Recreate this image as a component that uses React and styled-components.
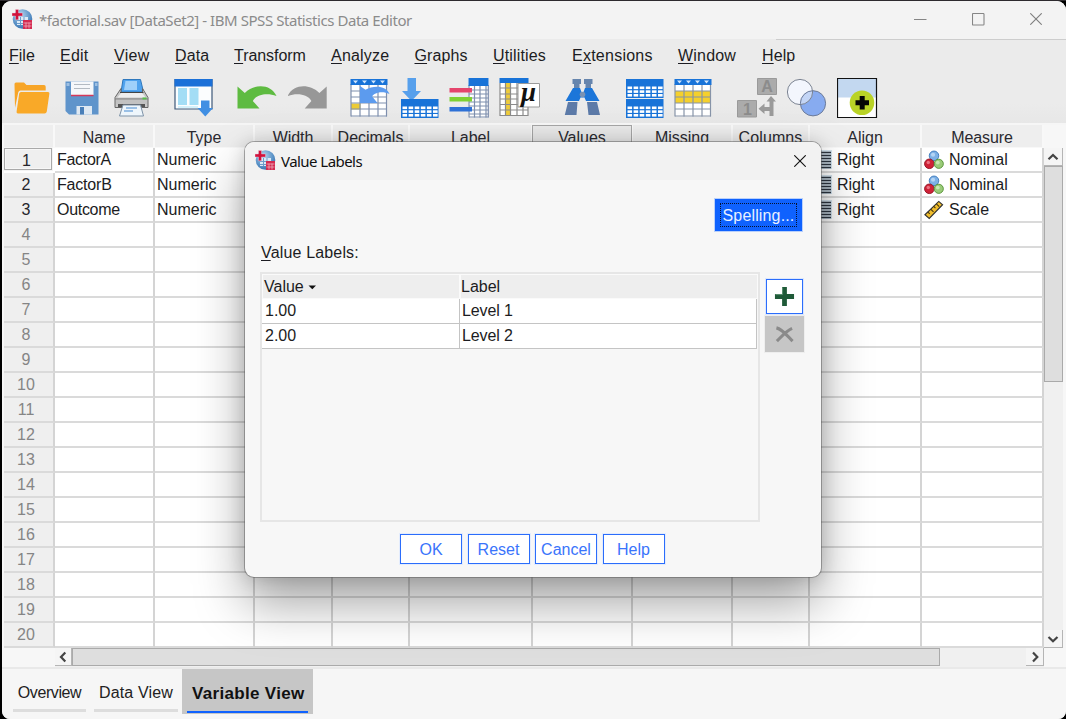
import React from 'react';
import styled, { createGlobalStyle, css } from 'styled-components';

const Global = createGlobalStyle`
  * { box-sizing: border-box; }
  html, body { margin: 0; background: #000; overflow: hidden; }
  body { font-family: "Liberation Sans", Arial, sans-serif; font-size: 16px; color: #1c1c22; }
  button { font: inherit; padding: 0; margin: 0; }
`;

const Screen = styled.div`
  width: 1066px; height: 719px; padding: 1px 0 0 2px;
  background: linear-gradient(#2d2a2e 0 1px, #000 1px);
`;
const Window = styled.main`
  position: relative; width: 1064px; height: 718px; overflow: hidden;
  display: flex; flex-direction: column; border-radius: 9px 9px 8px 8px; background: #f7f7f7;
`;

const TitleBar = styled.header`
  height: 38px; flex: none; display: flex; align-items: center; padding: 0 24px 1px 10px; background: #f3f3f3;
`;
const Title = styled.h1`
  margin: 0 auto 0 6px; font: 400 15px "Noto Sans", sans-serif; color: #8b8b8b;
  letter-spacing: ${p => p.$ls}px; white-space: pre;
`;
const DialogTitle = styled(Title)`color: #101010; margin-left: 5px;`;
const WindowControls = styled.div`display: flex; gap: 45px;`;

const MenuBar = styled.nav`
  height: 35px; flex: none; display: flex; align-items: center; padding: 0 0 1px 7px;
  background: linear-gradient(#cdcdcd, #cdcdcd) 774px 0 / 300px 1px no-repeat #ebebeb;
`;
const MenuItem = styled.span`
  width: ${p => p.$w}px; flex: none; letter-spacing: ${p => p.$ls || 0}px; white-space: nowrap;
`;
const Mnemonic = styled.span`
  text-decoration: underline; text-decoration-thickness: 1px; text-underline-offset: 2px;
`;

const Toolbar = styled.div`
  height: 49px; flex: none; display: flex; align-items: flex-start; background: linear-gradient(#ebebeb 60%, #e7e7e7);
`;
const ToolIcon = styled.svg`height: 48px; flex: none; display: block; margin-left: ${p => p.$gap}px;`;

const Sheet = styled.section`
  display: flex; flex-direction: column; flex: none; border-top: 2px solid #f6f6f6; padding-left: 2px; background: #f7f7f7;
`;
const HeaderRow = styled.div`height: 23px; display: flex;`;
const HeaderCell = styled.div`
  width: ${p => p.$w}px; flex: none; padding-top: 3px; text-align: center; line-height: 19px;
  letter-spacing: ${p => p.$ls || 0}px; color: #2a2a30; background: #eeeeee;
  border-right: 2px solid #f8f8f8; border-bottom: 1px solid #f8f8f8;
  ${p => p.$active && css`border: 1px solid #a6a6a6; margin: 0 1px 0 -1px; padding-top: 2px; background: #e9e9e9;`}
`;
const SheetBody = styled.div`display: flex; height: 500px;`;
const Rows = styled.div`width: 1040px; flex: none;`;
const Row = styled.div`height: 25px; display: flex; background: #fff;`;
const RowNumber = styled.div`
  width: 51px; height: 25px; flex: none; padding: 0 5px 1px 0; text-align: center; line-height: 24px;
  color: ${p => (p.$used ? '#26262c' : '#858585')}; background: #efefef;
  border-right: 2px solid #d4d4d4; border-bottom: 2px solid #dadada;
  ${p => p.$current && css`
    height: 22px; width: 48px; margin-right: 3px; padding: 0 3px 0 0; line-height: 23px;
    border: 1px solid #a9a9a9; outline: 1px solid #f4f4f4;
    box-shadow: inset 0 0 0 1px #f7f7f7;
  `}
`;
const Cell = styled.div`
  width: ${p => p.$w}px; height: 25px; flex: none; padding: 1px 0 0 2px; display: flex; align-items: center;
  border-right: 2px solid #d4d4d4; border-bottom: 2px solid #dadada; letter-spacing: ${p => p.$ls || 0}px;
  svg { flex: none; margin: -1px 5px 0 0; }
`;
const VScroll = styled.div`
  width: 19px; margin-left: 0; display: flex; flex-direction: column; background: #f0f0f0;
`;
const HScroll = styled.div`
  width: 989px; height: 19px; margin-left: 51px; display: flex; background: #f0f0f0;
`;
const ArrowButton = styled.div`
  width: ${p => p.$w}px; height: ${p => p.$h}px; flex: none; display: flex; align-items: center; justify-content: center;
  background: #f5f5f5; border-right: 1px solid #b5b5b5; border-bottom: 1px solid #b5b5b5;
  margin-top: ${p => (p.$end ? 'auto' : 0)};
  margin-left: ${p => (p.$endX ? 'auto' : 0)};
`;
const Thumb = styled.div`
  width: ${p => p.$w}px; height: ${p => p.$h}px; flex: none; background: #dedede; border: 1px solid #aaaaaa;
`;

const TabBar = styled.footer`
  flex: 1; display: flex; align-items: flex-start; border-top: 2px solid #e9e9e9; padding-left: 11px; background: #f6f6f6;
`;
const Tab = styled.div`
  width: ${p => p.$w}px; height: 43px; margin-right: ${p => p.$mr}px; display: flex; align-items: center; justify-content: center;
  border-bottom: 3px solid #dddddd; padding-top: 7px; letter-spacing: ${p => p.$ls}px; white-space: nowrap; color: #222;
`;
const ActiveTab = styled.div`
  width: 131px; height: 45px; padding: 0 5px; background: #c6c6c6;
  span {
    display: block; height: 44px; padding: 6px 0 0 5px; line-height: 37px; font-size: 17px; font-weight: 700; letter-spacing: 0.32px;
    border-bottom: 2px solid #0f62fe; color: #111; white-space: nowrap;
  }
`;

const Dialog = styled.div`
  position: absolute; left: 243px; top: 141px; width: 576px; height: 435px; border-radius: 9px; background: #f7f7f7;
  display: flex; flex-direction: column; 
  box-shadow: 0 0 0 1px rgba(90, 90, 90, .5), 0 26px 50px rgba(0, 0, 0, .36), 0 0 18px rgba(0, 0, 0, .16);
`;
const DialogBar = styled.div`
  height: 38px; flex: none; display: flex; align-items: center; padding: 0 15px 1px 10px;
  background: #f2f2f2; border-radius: 9px 9px 0 0;
`;
const DialogBody = styled.div`display: flex; flex-direction: column; padding: 19px 15px 0 15px;`;
const SpellingButton = styled.button`
  align-self: flex-end; margin-right: 4px; width: 87px; height: 32px; padding: 4px 5px; border: 0;
  background: #0f62fe; color: #e8f0ff; box-shadow: 0 0 0 1px #b9d0fb;
  span { display: block; height: 24px; line-height: 24px; border: 1px dotted #06122e; letter-spacing: .15px; }
`;
const FieldLabel = styled.div`margin-top: 11px; padding: 1px 0 0 1px; line-height: 20px; height: 30px; letter-spacing: .16px;`;
const ListArea = styled.div`display: flex; gap: 5px;`;
const List = styled.div`width: 500px; height: 250px; border: 2px solid #e6e6e6;`;
const ListHead = styled.div`
  width: 496px; height: 25px; padding: 1px; display: flex; gap: 2px; background: #fafafa;
  div { height: 23px; padding-left: 1px; background: #eeeeee; display: flex; align-items: center; padding-top: 1px; }
  div:first-child { width: 196px; }
  div:last-child { width: 296px; padding-left: 0; }
  svg { margin-left: 4px; }
`;
const ListRow = styled.div`
  width: 495px; height: 25px; display: flex; background: #fff; border-bottom: 1px solid #c4c4c4; 
  span { line-height: 24px; padding-left: 3px; border-right: 1px solid #c4c4c4; }
  span:first-child { width: 198px; }
  span:last-child { width: 297px; padding-left: 2px; letter-spacing: -.1px; }
`;
const SideButtons = styled.div`display: flex; flex-direction: column; align-items: center; padding-top: 7px; width: 39px;`;
const IconButton = styled.button`
  width: ${p => p.$w}px; height: ${p => p.$h}px; flex: none; display: flex; align-items: center; justify-content: center;
  background: ${p => (p.$off ? '#c6c6c6' : '#fff')}; border: ${p => (p.$off ? '0' : '1px solid #2b6dfb')};
  box-shadow: 0 0 0 1px ${p => (p.$off ? '#eeeeee' : '#dce7fd')}; margin-bottom: 2px;
`;
const Actions = styled.div`display: flex; gap: 5.5px; margin: 12px 0 0 140px;`;
const ActionButton = styled.button`
  width: 62px; height: 30px; background: #fff; border: 1px solid #2b6dfb; color: #3a74fb;
  box-shadow: 0 0 0 1px #e3ecfd; letter-spacing: ${p => p.$ls || 0}px; padding-top: 2px;
`;

const AppLogo = () => (
  <svg width="21" height="21" viewBox="0 0 21 21">
    <defs>
      <radialGradient id="globe" cx=".4" cy=".3" r=".8">
        <stop offset="0" stopColor="#b9d6ee" /><stop offset=".6" stopColor="#5b93c8" /><stop offset="1" stopColor="#2f68a6" />
      </radialGradient>
    </defs>
    <circle cx="10.500" cy="10" r="9.800" fill="url(#globe)" />
    <path d="M5 8h11v8H5z" fill="#dceaf6" />
    <path d="M5 11.500h11M5 14.500h11M8.500 8v8M12 8v8" stroke="#6c9ccb" strokeWidth="1" />
    <path d="M3.500 0.500h3v3.500h4v3H6.500V10.800H3.500V7H0V4h3.500z" fill="#d1123c" stroke="#eccdd8" strokeWidth=".4" />
    <path d="M11 11H20V20H11z" fill="#d42a50" />
    <path d="M11.500 14h8M11.500 17h8M14 13.500v6M17 13.500v6" stroke="#f0b9c6" strokeWidth=".7" />
  </svg>
);

const Lines = ({ xs, ys, x1, x2, y1, y2, color = '#7f8fae' }) => (
  <g stroke={color} strokeWidth="1.2" fill="none">
    {xs.map(x => <path key={'x' + x} d={`M${x} ${y1}V${y2}`} />)}
    {ys.map(y => <path key={'y' + y} d={`M${x1} ${y}H${x2}`} />)}
  </g>
);

const MiniTable = ({ x, y }) => (
  <g>
    <path d={`M${x} ${y}h37.500v19h-37.500z`} fill="#1873d8" />
    {[7.5, 11.3, 15].map(dy => [1.5, 7.6, 13.7, 19.8, 25.9, 32].map(dx => (
      <rect key={dy + '-' + dx} x={x + dx} y={y + dy} width="4.600" height="2.600" fill="#fff" />
    )))}
  </g>
);

const icons = [
  { x: 14, w: 36, art: <g>
    <path d="M14.500 84q0-1.500 1.500-1.500h8l2.500 2.500h17.500q1.700 0 1.700 1.700V90.500H20.500q-1.800 0-2.200 1.800L15 108z" fill="#f7a527" />
    <path d="M21 92H48q1.700 0 1.400 1.600L46.800 111.500q-.4 2-2.300 2H18q-1.800 0-1.400-1.900L19.200 93.600Q19.500 92 21 92z" fill="#f9a928" />
  </g> },
  { x: 65, w: 34, art: <g>
    <path d="M65.500 81.500H98.500V114.500H69L65.500 111z" fill="#5f94cb" />
    <path d="M71 81.500H93.500V95H71z" fill="#f5f7fa" />
    <path d="M74 84.500H90M74 88.500H90" stroke="#b3bac2" />
    <path d="M71 95.500H93.500" stroke="#d5385a" strokeWidth="1.500" />
    <path d="M76.500 106H92V114.500H76.500z" fill="#dfe9f3" />
    <path d="M80 107h4v7.500h-4z" fill="#4a7fb8" />
    <path d="M66.500 83h3v3h-3zM95 83h2.500v3H95z" fill="#9dbfe2" />
  </g> },
  { x: 114, w: 35, art: <g>
    <path d="M123 79.500H140.500L143 90V92H121z" fill="#4fa2ee" stroke="#2f78bd" />
    <path d="M125.500 81h11.500v9H124z" fill="#9fd0fa" />
    <path d="M121 88.500L115 97.500V107.500H148V97.500L142.500 88.500V93H121z" fill="#c9c9c9" stroke="#666" />
    <path d="M117.500 97.500L122 92H141.500L145.500 97.500z" fill="#eeeeee" />
    <path d="M120 92.500H143.500" stroke="#444" strokeWidth="1.200" />
    <path d="M115.500 99H147.500" stroke="#6e6e6e" strokeWidth="1.200" />
    <path d="M116 99.800H147V104H116z" fill="#c2c2c2" />
    <path d="M118 104H145V107H118z" fill="#555" />
    <path d="M142.500 98.500h4" stroke="#57c14b" strokeWidth="2" />
    <path d="M123 105H140.500L143.500 116H119.500z" fill="#eef6fc" stroke="#7e93a8" />
    <path d="M126 108h11M124 111h9" stroke="#7faede" strokeWidth="1.300" />
  </g> },
  { x: 174, w: 39, art: <g>
    <path d="M175 79.500H212V109H175z" fill="#fbfdfe" stroke="#3d5878" strokeWidth="1.200" />
    <path d="M174.500 79H212.500V86.500H174.500z" fill="#1b70d8" />
    <path d="M178 88h9v17h-9zM189.500 88h9v17h-9z" fill="#a3ddf5" />
    <path d="M178 107h20" stroke="#c9ecfa" strokeWidth="1.500" />
    <path d="M201 100.500h8.500V108H213L205.300 116.500L197.500 108H201z" fill="#408fe3" />
  </g> },
  { x: 237, w: 40, art: <path d="M237.500 86.500L244.800 93C254 83.500 271 83.500 276.500 96C267 92.500 256 94.500 252.800 101L259.500 108.500H237.500z" fill="#5ebb41" /> },
  { x: 288, w: 40, art: <path d="M326.700 86.500L319.400 93C310.200 83.500 293.200 83.500 287.700 96C297.200 92.500 308.200 94.500 311.400 101L304.700 108.500H326.700z" fill="#979797" /> },
  { x: 350, w: 40, art: <g>
    <path d="M351 79h36v37.500h-36z" fill="#fff" />
    <path d="M351 103.500h9.500v6H351z" fill="#eccb35" />
    <Lines xs={[351, 360, 369, 378, 386.5]} ys={[91, 97, 103, 109, 116]} x1={351} x2={387} y1={84} y2={116.5} />
    <path d="M350.500 79h37v6h-37z" fill="#1873d8" />
    <path d="M353 80.500h5l-2.500 3zM362 80.500h5l-2.500 3zM371 80.500h5l-2.500 3zM380 80.500h5l-2.500 3z" fill="#cfe4fa" />
    <path d="M360 86L365.500 89.800C373 85.500 386 85 389.500 94C382 90.500 374 93 372.200 96.500L377.500 103H360z" fill="#5c9bee" />
  </g> },
  { x: 400, w: 39, art: <g>
    <path d="M407.500 78H416V91H421L411.500 101L402 91H407.500z" fill="#57a0ec" />
    <MiniTable x={401} y={99} />
  </g> },
  { x: 449, w: 40, art: <g>
    <path d="M468.500 78H488.500V117.500H468.500z" fill="#fff" />
    <Lines xs={[469, 474.5, 480, 486, 488.3]} ys={[90, 94, 98, 102, 106, 110, 114, 117]} x1={469} x2={488.5} y1={85} y2={117.5} />
    <path d="M468.500 78H488.500V86H468.500z" fill="#1873d8" />
    <path d="M449.500 88H472v4.500H449.500z" fill="#e5456c" />
    <path d="M449.500 97H472v4.500H449.500z" fill="#7fd133" />
    <path d="M449.500 107H472v4.500H449.500z" fill="#2e71d6" />
  </g> },
  { x: 499, w: 41, art: <g>
    <path d="M500 78H528V116H500z" fill="#fff" />
    <path d="M505.500 83H510.500V116H505.500z" fill="#efcc3a" />
    <Lines color="#8b8b8b" xs={[500, 505.5, 510.5, 517, 523, 528]} ys={[88, 94, 99, 104.5, 110, 115.5]} x1={500} x2={528} y1={83} y2={116} />
    <path d="M499.500 78H528.500V83H499.500z" fill="#1873d8" />
    <path d="M518 83.500H539.500V107H518z" fill="#fff" stroke="#9a9a9a" />
    <text x="521" y="101" fontFamily="Liberation Serif, serif" fontStyle="italic" fontWeight="700" fontSize="27" fill="#111">μ</text>
  </g> },
  { x: 564, w: 37, art: <g>
    <path d="M572.500 79h8.500v5h-1.500v5H574v-5h-1.500zM584 79h8.500v5H591v5h-5.500v-5H584z" fill="#6685ad" />
    <path d="M573 88H580L581.500 92H583.500L585 88H592L599.500 101H586L584.500 97.500H580.500L579 101H565.500z" fill="#1c76d9" />
    <circle cx="582.500" cy="94.500" r="2.800" fill="#7892b4" />
    <path d="M568 102H577.500L576.500 115H564.800zM587 102H597L600 115H588.500z" fill="#5c7aa8" />
  </g> },
  { x: 625, w: 39, art: <g><MiniTable x={626} y={79} /><MiniTable x={626} y={99} /></g> },
  { x: 674, w: 38, art: <g>
    <path d="M675 79h36v37.500h-36z" fill="#fff" />
    <path d="M675 91h36v12h-36z" fill="#f5d02c" />
    <Lines xs={[675, 684, 693, 702, 710.5]} ys={[91, 97, 103, 109, 116]} x1={675} x2={711} y1={84} y2={116.5} color="#8794a8" />
    <path d="M674.500 79h37v6h-37z" fill="#1873d8" />
    <path d="M677 80.500h5l-2.500 3zM686 80.500h5l-2.500 3zM695 80.500h5l-2.500 3zM704 80.500h5l-2.500 3z" fill="#cfe4fa" />
  </g> },
  { x: 737, w: 41, art: <g>
    <path d="M757.500 78.500H776.500V94.500H757.500zM737.500 100.500H756.500V117H737.500z" fill="#ababab" stroke="#9a9a9a" />
    <text x="767" y="92" textAnchor="middle" fontSize="16" fontWeight="700" fill="#8c8c8c">A</text>
    <text x="747.500" y="114.500" textAnchor="middle" fontSize="16" fontWeight="700" fill="#8c8c8c">1</text>
    <path d="M766.500 101.500L771 96L776 101.500H773.500V116H769.500V111H764.500V114L758.500 108.700L764.500 103.500V107H769.500V101.500z" fill="#9a9a9a" />
  </g> },
  { x: 786, w: 41, art: <g>
    <circle cx="800" cy="92" r="12.600" fill="#f3f6fd" />
    <circle cx="813" cy="103.300" r="12.600" fill="#87abf0" />
    <path d="M800.600 104.600A12.600 12.600 0 0 1 812.500 90.700A12.600 12.600 0 0 1 800.600 104.600z" fill="#c3d5f6" />
    <circle cx="800" cy="92" r="12.600" fill="none" stroke="#7c8492" />
    <circle cx="813" cy="103.300" r="12.600" fill="none" stroke="#6d7b98" />
  </g> },
  { x: 837, w: 41, art: <g>
    <path d="M837.500 78.500H876.500V117.500H837.500z" fill="#fff" />
    <path d="M837.500 78.500H876.500V97.500H837.500z" fill="#c3d8f0" />
    <circle cx="862" cy="102.700" r="12.300" fill="#b9d326" />
    <path d="M859.700 96H864.700V100.300H869V105.300H864.700V109.500H859.700V105.300H855.500V100.300H859.700z" fill="#050505" />
    <path d="M837.500 78.500H876.500V117.500H837.500z" fill="none" stroke="#111" strokeWidth="1.200" />
  </g> },
];

const NominalIcon = () => (
  <svg width="20" height="20" viewBox="0 0 21 20">
    <circle cx="10.500" cy="5.600" r="5" fill="#7db1e6" stroke="#3f7bbd" />
    <circle cx="5.600" cy="14" r="5" fill="#cf2137" stroke="#951728" />
    <circle cx="15.500" cy="14" r="4.800" fill="#9acb78" stroke="#58953a" />
    <circle cx="9.500" cy="4.500" r="2.200" fill="#b4d4f4" />
    <circle cx="4.500" cy="12.700" r="1.800" fill="#ea7180" />
    <circle cx="14.500" cy="12.700" r="2" fill="#c9e6b4" />
  </svg>
);
const ScaleIcon = () => (
  <svg width="20" height="20" viewBox="0 0 21 20">
    <path d="M1 15L15.500 1L19.500 4.500L5.500 18.800z" fill="#f0bd2c" stroke="#333" strokeWidth="1.200" />
    <path d="M4 12l2 2M7 9l3 3M10 6l2 2M13 3.500l3 3" stroke="#4a3a10" strokeWidth="1.200" />
  </svg>
);
const AlignIcon = () => (
  <svg width="20" height="19" viewBox="0 0 20 19">
    <path d="M0 0h20v19H0z" fill="#d3e2ec" />
    <path d="M2 2.500h17M2 5.500h17M2 8.500h17M2 11.500h17M2 14.500h17M2 17.500h17" stroke="#2c3540" strokeWidth="1.600" />
  </svg>
);
const Chevron = ({ d }) => (
  <svg width="12" height="12" viewBox="0 0 12 12"><path d={d} fill="none" stroke="#444" strokeWidth="2.200" /></svg>
);
const CloseIcon = ({ color }) => (
  <svg width="12" height="12" viewBox="0 0 12 12"><path d="M.3.3L11.700 11.700M11.700.3L.3 11.700" stroke={color} strokeWidth="1.100" /></svg>
);

const menus = [
  ['', 'F', 'ile', 51, 0], ['', 'E', 'dit', 54, .2], ['', 'V', 'iew', 61, .3], ['', 'D', 'ata', 59, .1],
  ['', 'T', 'ransform', 97, -.05], ['', 'A', 'nalyze', 83.5, .2], ['', 'G', 'raphs', 78.5, .1], ['', 'U', 'tilities', 79, .15],
  ['E', 'x', 'tensions', 106, .25], ['', 'W', 'indow', 84, .2], ['', 'H', 'elp', 50, .1],
];
const columns = [
  ['Name', 100, 0], ['Type', 100, 0], ['Width', 78, -.1], ['Decimals', 77, 0], ['Label', 123, 0],
  ['Values', 100, 0], ['Missing', 100, 0], ['Columns', 77, .1], ['Align', 112, 0], ['Measure', 122, -.1],
];
const variables = [
  { name: 'FactorA', ls: -.3, measure: 'Nominal' },
  { name: 'FactorB', ls: -.2, measure: 'Nominal' },
  { name: 'Outcome', ls: -.3, measure: 'Scale' },
];

const cellContent = (variable, column) => {
  if (!variable) return null;
  if (column === 'Name') return variable.name;
  if (column === 'Type') return 'Numeric';
  if (column === 'Align') return <><AlignIcon />Right</>;
  if (column === 'Measure') return <>{variable.measure === 'Scale' ? <ScaleIcon /> : <NominalIcon />}{variable.measure}</>;
  return null;
};

export default function App() {
  return (
    <Screen>
      <Global />
      <Window>
        <TitleBar>
          <AppLogo />
          <Title $ls={-.44}>*factorial.sav [DataSet2] - IBM SPSS Statistics Data Editor</Title>
          <WindowControls>
            <svg width="13" height="13" viewBox="0 0 13 13"><path d="M0 6.500h12.500" stroke="#858585" /></svg>
            <svg width="13" height="13" viewBox="0 0 13 13"><rect x=".5" y=".5" width="11.500" height="11.500" rx=".8" fill="none" stroke="#858585" strokeWidth="1.100" /></svg>
            <CloseIcon color="#7d7d7d" />
          </WindowControls>
        </TitleBar>
        <MenuBar>
          {menus.map(([a, m, b, w, ls]) => <MenuItem key={m + b} $w={w} $ls={ls}>{a}<Mnemonic>{m}</Mnemonic>{b}</MenuItem>)}
        </MenuBar>
        <Toolbar>
          {icons.map((icon, i) => {
            const end = i ? icons[i - 1].x + icons[i - 1].w : 2;
            return (
              <ToolIcon key={icon.x} width={icon.w} $gap={icon.x - end} viewBox={`${icon.x} 74 ${icon.w} 48`}>{icon.art}</ToolIcon>
            );
          })}
        </Toolbar>
        <Sheet>
          <HeaderRow>
            <HeaderCell $w={51} />
            {columns.map(([name, w, ls]) => <HeaderCell key={name} $w={w} $ls={ls} $active={name === 'Values'}>{name}</HeaderCell>)}
          </HeaderRow>
          <SheetBody>
            <Rows>
              {Array.from({ length: 20 }, (_, i) => (
                <Row key={i}>
                  <RowNumber $used={i < 3} $current={i === 0}>{i + 1}</RowNumber>
                  {columns.map(([name, w]) => (
                    <Cell key={name} $w={w} $ls={name === 'Name' && variables[i] ? variables[i].ls : 0}>{cellContent(variables[i], name)}</Cell>
                  ))}
                </Row>
              ))}
            </Rows>
            <VScroll>
              <ArrowButton $w={19} $h={18}><Chevron d="M1.500 8.300L6 4L10.500 8.300" /></ArrowButton>
              <Thumb $w={19} $h={216} />
              <ArrowButton $w={19} $h={18} $end><Chevron d="M1.500 4L6 8.300L10.500 4" /></ArrowButton>
            </VScroll>
          </SheetBody>
          <HScroll>
            <ArrowButton $w={17} $h={18}><Chevron d="M8.300 1.500L4 6L8.300 10.500" /></ArrowButton>
            <Thumb $w={868} $h={18} />
            <ArrowButton $w={18} $h={18} $endX><Chevron d="M4 1.500L8.300 6L4 10.500" /></ArrowButton>
          </HScroll>
        </Sheet>
        <TabBar>
          <Tab $w={73} $mr={8} $ls={-.4}>Overview</Tab>
          <Tab $w={84} $mr={4} $ls={.15}>Data View</Tab>
          <ActiveTab><span>Variable View</span></ActiveTab>
        </TabBar>
        <Dialog role="dialog">
          <DialogBar>
            <AppLogo />
            <DialogTitle as="h2" $ls={-.55}>Value Labels</DialogTitle>
            <CloseIcon color="#111" />
          </DialogBar>
          <DialogBody>
            <SpellingButton><span>Spelling...</span></SpellingButton>
            <FieldLabel><Mnemonic>V</Mnemonic>alue Labels:</FieldLabel>
            <ListArea>
              <List>
                <ListHead>
                  <div>Value<svg width="9" height="5" viewBox="0 0 9 5"><path d="M.5 .5H8L4.300 4.300z" fill="#111" /></svg></div>
                  <div>Label</div>
                </ListHead>
                <ListRow><span>1.00</span><span>Level 1</span></ListRow>
                <ListRow><span>2.00</span><span>Level 2</span></ListRow>
              </List>
              <SideButtons>
                <IconButton $w={37} $h={35} aria-label="Add">
                  <svg width="21" height="21" viewBox="0 0 22 22">
                    <path d="M8.500 1h5v7.500H21v5h-7.500V21h-5v-7.500H1v-5h7.500z" fill="#1f5a38" />
                    <path d="M9 1.500v7.500H1.500" fill="none" stroke="#5f9373" />
                  </svg>
                </IconButton>
                <IconButton $w={39} $h={36} $off aria-label="Remove">
                  <svg width="19" height="17" viewBox="0 0 20 17">
                    <path d="M1.500 1.500C8 3 13 10 18.500 15.500M18 2C12 4.500 7 10.500 2 15.500" fill="none" stroke="#8a8a8a" strokeWidth="3.300" />
                  </svg>
                </IconButton>
              </SideButtons>
            </ListArea>
            <Actions>
              <ActionButton>OK</ActionButton>
              <ActionButton>Reset</ActionButton>
              <ActionButton>Cancel</ActionButton>
              <ActionButton>Help</ActionButton>
            </Actions>
          </DialogBody>
        </Dialog>
      </Window>
    </Screen>
  );
}
